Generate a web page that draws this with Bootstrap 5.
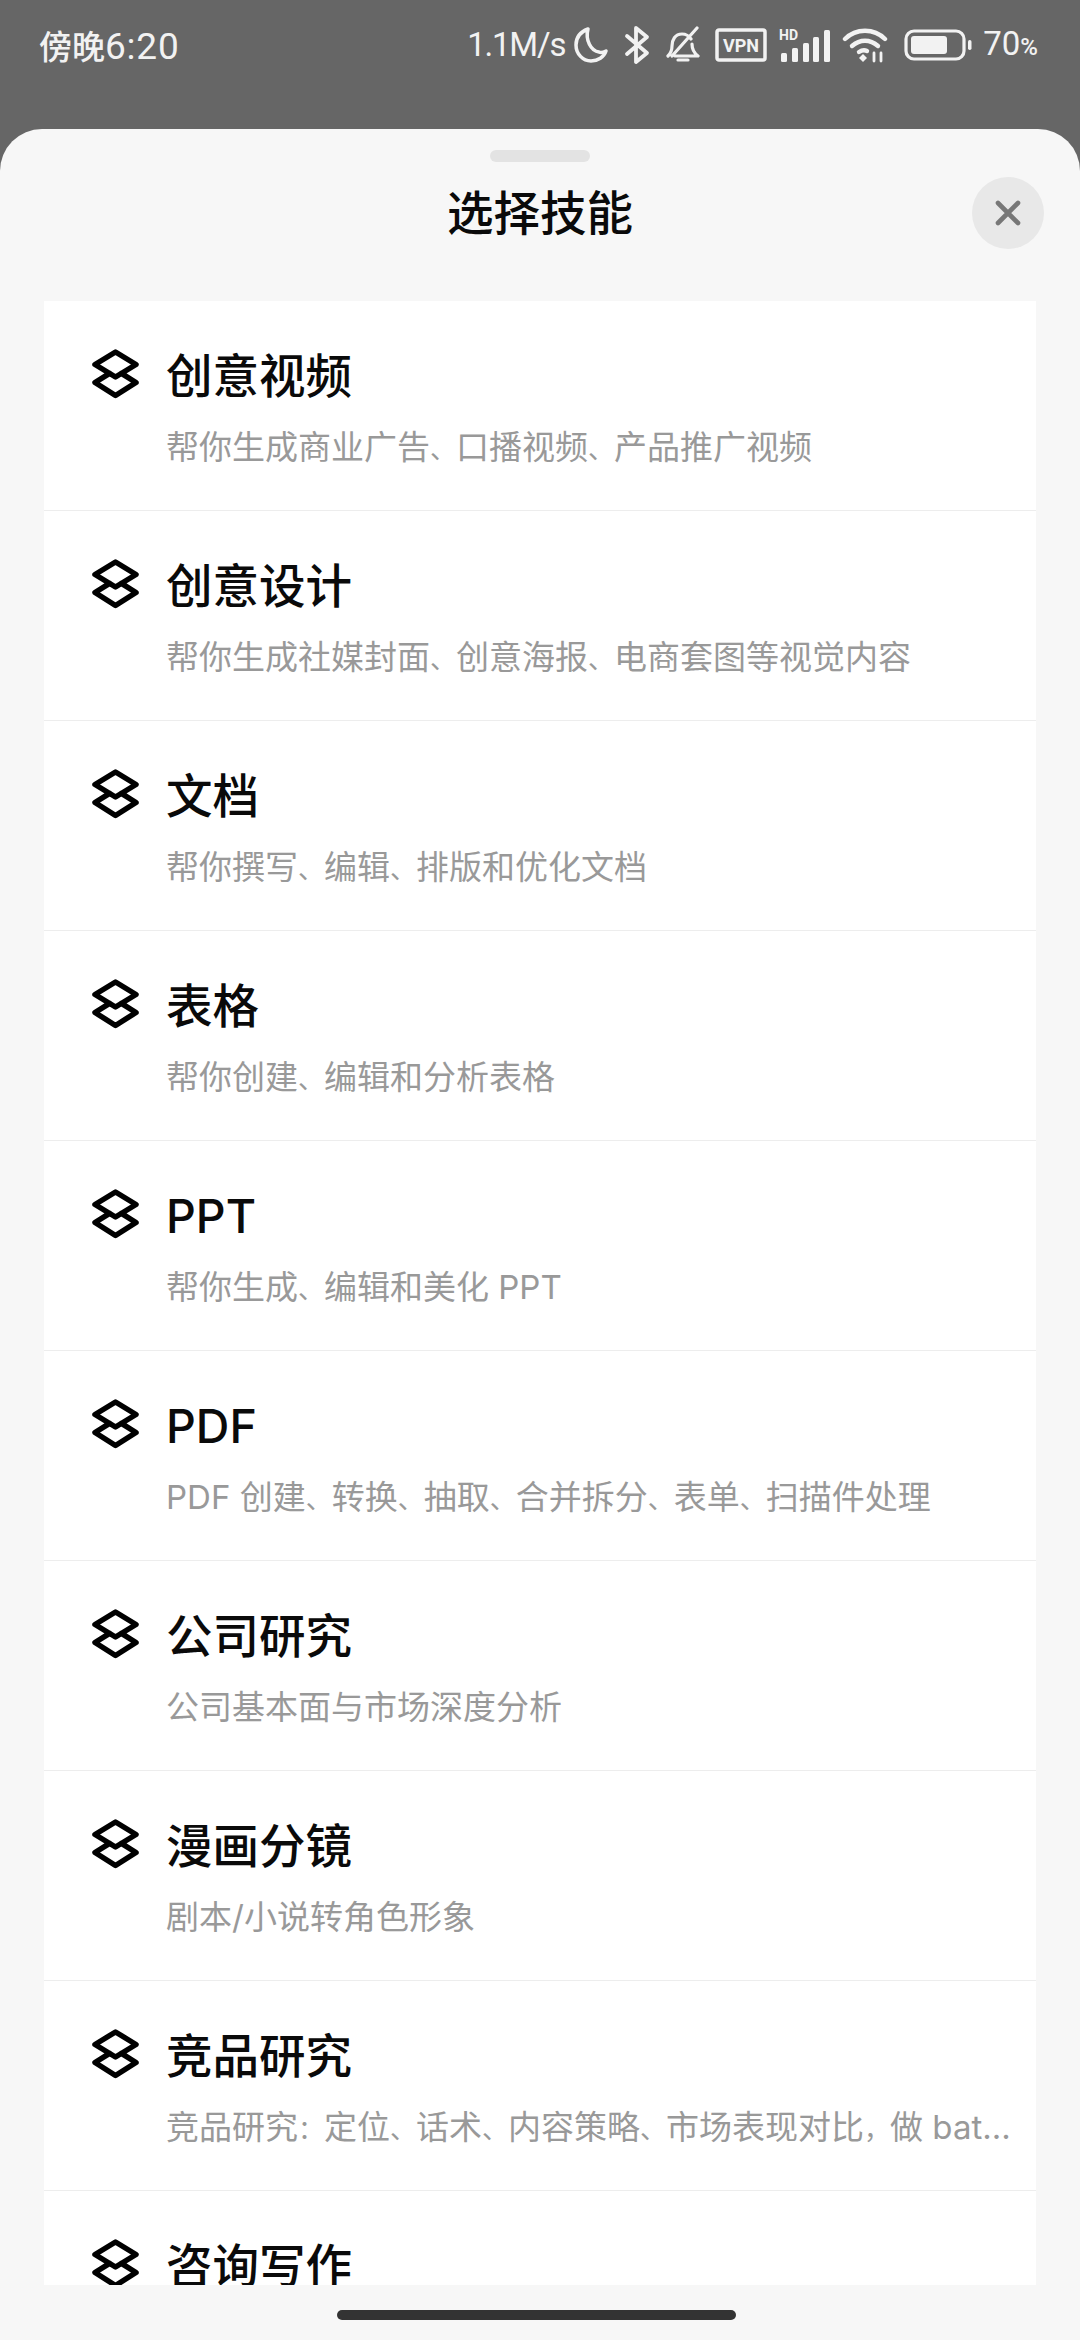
<!DOCTYPE html>
<html lang="zh">
<head>
<meta charset="utf-8">
<title>选择技能</title>
<link href="https://cdn.jsdelivr.net/npm/bootstrap@5.3.0/dist/css/bootstrap.min.css" rel="stylesheet">
<style>
html,body{width:1080px;height:2340px;margin:0;overflow:hidden;background:#666;font-family:Inter,"Noto Sans CJK SC",sans-serif}
.stat-bar{height:129px;padding:25px 42px 0 39px;color:#f2f2f2;align-items:flex-start}
.stat-time{font-size:33px;line-height:40px;font-weight:500;font-family:"Noto Sans CJK SC",sans-serif}
.stat-time span{font-family:Roboto,sans-serif;font-size:37px;font-weight:400;letter-spacing:.8px}
.stat-txt{font-family:Roboto,sans-serif;font-size:33px;line-height:40px;letter-spacing:-1.2px}
.stat-pct{font-family:Roboto,sans-serif;font-size:33px;line-height:40px;margin-left:10px}
.stat-pct span{font-size:24px;font-weight:500}
.stat-icons{height:40px}
.stat-icons svg{display:block;flex:none}
.sheet{height:2211px;background:#f7f7f7;border-radius:42px 42px 0 0;position:relative;padding-top:21px}
.grip{width:100px;height:12px;border-radius:6px;background:#e3e3e3;margin:0 auto}
.sheet-title{font-size:46.5px;line-height:60px;font-weight:500;color:#0a0a0a;text-align:center;margin:0;padding-top:21px;height:139px}
.close-btn{position:absolute;top:48px;right:36px;width:72px;height:72px;border-radius:50%;background:#e8e8e8;border:0;padding:0}
.skill-list{height:1984px;margin:0 44px;overflow:hidden;background:#fff;border-radius:0}
.skill-row{height:210px;padding:45px 26px 0 48px;border-bottom:2px solid #ededed;background:#fff;border-left:0;border-right:0;border-top:0;gap:27px}
.skill-ico{flex:none;width:47px;height:50px;margin-top:3px}
.skill-name{font-size:46.5px;line-height:60px;font-weight:500;color:#0a0a0a}
.skill-desc{font-size:33px;line-height:44px;color:#999;margin-top:19px;white-space:nowrap}
.skill-desc i{font-style:normal;font-size:26px}
.skill-body{min-width:0;flex:1}
.home-wrap{height:55px;padding-top:25px}
.home-bar{width:399px;height:10px;border-radius:5px;background:#333;margin-left:337px}
</style>
</head>
<body>
<svg width="0" height="0" class="d-block position-absolute">
<symbol id="layers" viewBox="0 0 47 50">
<path d="M23.5 3 44 15.5 23.5 28 3 15.5Z M17.6 24.3 3 33.5 23.5 46.5 44 33.5 29.4 24.3" fill="none" stroke="#000" stroke-width="5.5" stroke-linejoin="round" stroke-linecap="round"/>
</symbol>
</svg>

<div class="stat-bar d-flex justify-content-between">
  <div class="stat-time">傍晚<span>6:20</span></div>
  <div class="stat-icons d-flex align-items-center">
    <div class="stat-txt">1.1M/s</div>
    <svg class="ms-2" width="36" height="38" viewBox="0 0 36 38"><path d="M15 3C7 6 3 12 3 19c0 9 7 16 15 16 7 0 13-4 15-10-2 1-5 2-7 1C18 25 12 14 15 3Z" fill="none" stroke="#f2f2f2" stroke-width="3.5" stroke-linejoin="round"/></svg>
    <svg style="margin-left:15px" width="26" height="40" viewBox="0 0 26 40"><path d="M3 11 23 28 12 37V3l11 9L3 29" fill="none" stroke="#f2f2f2" stroke-width="3.8" stroke-linejoin="round" stroke-linecap="round"/></svg>
    <svg style="margin-left:15px" width="36" height="38" viewBox="0 0 36 38"><path d="M3 30c3-3 4-5 4-10 0-6 3-12 10-12 4 0 7 2 9 5M27 18c0 6 2 9 6 12H10M13 34h10M7 30 32 2" fill="none" stroke="#f2f2f2" stroke-width="3.2" stroke-linejoin="round" stroke-linecap="round"/></svg>
    <svg style="margin-left:14px" width="52" height="34" viewBox="0 0 52 34"><rect x="2" y="2" width="48" height="30" rx="2" fill="none" stroke="#f2f2f2" stroke-width="3.5"/><text x="26" y="24" text-anchor="middle" font-family="Roboto,sans-serif" font-weight="700" font-size="18" fill="#f2f2f2">VPN</text></svg>
    <svg style="margin-left:12px" width="51" height="34" viewBox="0 0 51 34"><text x="0" y="12" font-family="Roboto,sans-serif" font-weight="700" font-size="14" fill="#f2f2f2">HD</text><g fill="#f2f2f2"><rect x="2" y="25" width="6" height="9" rx="1.5"/><rect x="13" y="20" width="6" height="14" rx="1.5"/><rect x="24" y="15" width="6" height="19" rx="1.5"/><rect x="34" y="9" width="6" height="25" rx="1.5"/><rect x="45" y="2" width="6" height="32" rx="1.5"/></g></svg>
    <svg style="margin-left:12px" width="46" height="36" viewBox="0 0 46 36"><g fill="none" stroke="#f2f2f2" stroke-width="4.4" stroke-linecap="round"><path d="M3 12C14 1 32 1 43 12"/><path d="M10 19c8-7 18-7 26 0"/><path d="M17 25c3-2 6-2 8-1"/></g><path d="M17 31l4-4 4 4-4 4Z" fill="#f2f2f2"/><path d="M32 34v-8M39 26v8" stroke="#f2f2f2" stroke-width="2.8" stroke-linecap="round"/></svg>
    <svg style="margin-left:16px" width="69" height="32" viewBox="0 0 69 32"><rect x="2" y="2" width="58" height="28" rx="8" fill="none" stroke="#f2f2f2" stroke-width="3.2"/><rect x="7" y="7" width="36" height="18" rx="3" fill="#f2f2f2"/><rect x="64" y="11" width="3.5" height="10" rx="1.7" fill="#f2f2f2"/></svg>
    <div class="stat-pct">70<span>%</span></div>
  </div>
</div>

<main class="sheet">
  <div class="grip"></div>
  <h1 class="sheet-title">选择技能</h1>
  <button class="close-btn d-flex align-items-center justify-content-center" aria-label="关闭">
    <svg width="26" height="26" viewBox="0 0 26 26"><path d="M3 3 23 23M23 3 3 23" stroke="#777" stroke-width="4.6" stroke-linecap="round"/></svg>
  </button>
  <div class="skill-list list-group list-group-flush">
    <div class="skill-row list-group-item d-flex flex-shrink-0"><svg class="skill-ico"><use href="#layers"/></svg><div class="skill-body"><div class="skill-name">创意视频</div><div class="skill-desc">帮你生成商业广告<i>、</i>口播视频<i>、</i>产品推广视频</div></div></div>
    <div class="skill-row list-group-item d-flex flex-shrink-0"><svg class="skill-ico"><use href="#layers"/></svg><div class="skill-body"><div class="skill-name">创意设计</div><div class="skill-desc">帮你生成社媒封面<i>、</i>创意海报<i>、</i>电商套图等视觉内容</div></div></div>
    <div class="skill-row list-group-item d-flex flex-shrink-0"><svg class="skill-ico"><use href="#layers"/></svg><div class="skill-body"><div class="skill-name">文档</div><div class="skill-desc">帮你撰写<i>、</i>编辑<i>、</i>排版和优化文档</div></div></div>
    <div class="skill-row list-group-item d-flex flex-shrink-0"><svg class="skill-ico"><use href="#layers"/></svg><div class="skill-body"><div class="skill-name">表格</div><div class="skill-desc">帮你创建<i>、</i>编辑和分析表格</div></div></div>
    <div class="skill-row list-group-item d-flex flex-shrink-0"><svg class="skill-ico"><use href="#layers"/></svg><div class="skill-body"><div class="skill-name">PPT</div><div class="skill-desc">帮你生成<i>、</i>编辑和美化 PPT</div></div></div>
    <div class="skill-row list-group-item d-flex flex-shrink-0"><svg class="skill-ico"><use href="#layers"/></svg><div class="skill-body"><div class="skill-name">PDF</div><div class="skill-desc">PDF 创建<i>、</i>转换<i>、</i>抽取<i>、</i>合并拆分<i>、</i>表单<i>、</i>扫描件处理</div></div></div>
    <div class="skill-row list-group-item d-flex flex-shrink-0"><svg class="skill-ico"><use href="#layers"/></svg><div class="skill-body"><div class="skill-name">公司研究</div><div class="skill-desc">公司基本面与市场深度分析</div></div></div>
    <div class="skill-row list-group-item d-flex flex-shrink-0"><svg class="skill-ico"><use href="#layers"/></svg><div class="skill-body"><div class="skill-name">漫画分镜</div><div class="skill-desc">剧本/小说转角色形象</div></div></div>
    <div class="skill-row list-group-item d-flex flex-shrink-0"><svg class="skill-ico"><use href="#layers"/></svg><div class="skill-body"><div class="skill-name">竞品研究</div><div class="skill-desc">竞品研究<i>：</i>定位<i>、</i>话术<i>、</i>内容策略<i>、</i>市场表现对比<i>，</i>做 bat...</div></div></div>
    <div class="skill-row list-group-item d-flex flex-shrink-0"><svg class="skill-ico"><use href="#layers"/></svg><div class="skill-body"><div class="skill-name">咨询写作</div></div></div>
  </div>
  <div class="home-wrap"><div class="home-bar"></div></div>
</main>
<script src="https://cdn.jsdelivr.net/npm/bootstrap@5.3.0/dist/js/bootstrap.bundle.min.js"></script>
</body>
</html>
